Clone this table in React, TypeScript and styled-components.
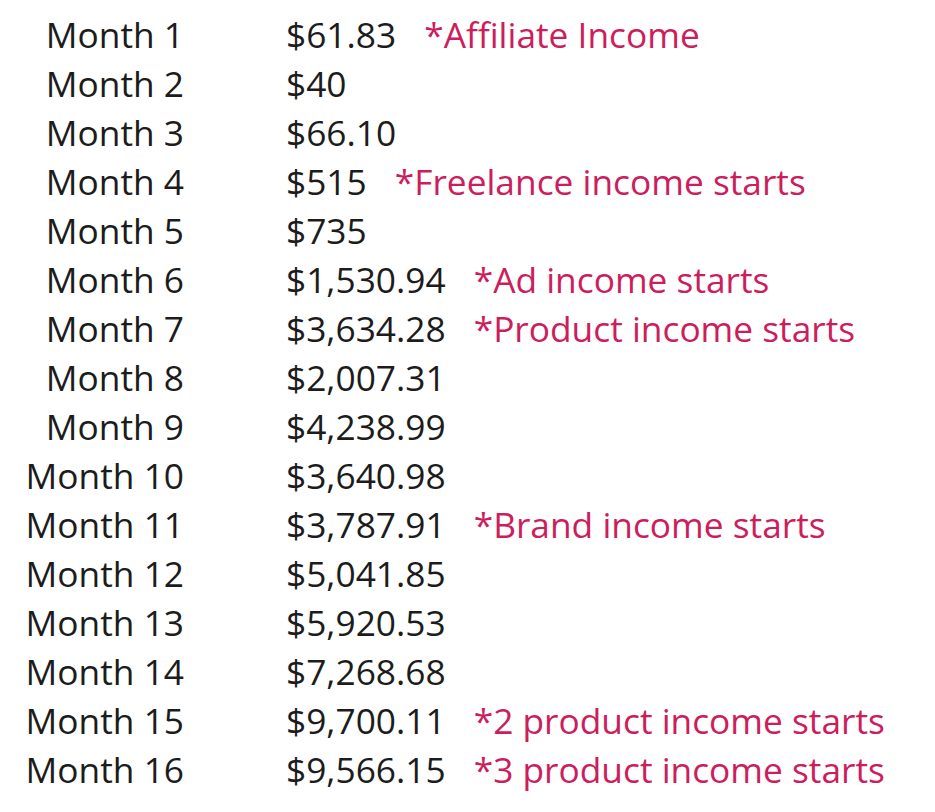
import React from "react";
import styled, { createGlobalStyle } from "styled-components";

const GlobalStyle = createGlobalStyle`
  html, body {
    margin: 0;
    padding: 0;
    background: #ffffff;
  }
  body {
    font-family: "Open Sans", "Noto Sans", sans-serif;
  }
`;

const Table = styled.div`
  display: flex;
  flex-direction: column;
  padding: 10px 0 0 0;
  font-family: "Open Sans", "Noto Sans", sans-serif;
  font-size: 35.3px;
  line-height: 49px;
  color: #1c1c1c;
`;

const Row = styled.div`
  display: flex;
  align-items: baseline;
  white-space: nowrap;
`;

const MonthCell = styled.span`
  width: 184px;
  text-align: right;
  flex: none;
`;

const AmountCell = styled.span`
  margin-left: 102px;
`;

const Note = styled.span`
  margin-left: 28px;
  color: #cc1d5d;
`;

const rows: { month: string; amount: string; note?: string }[] = [
  { month: "Month 1", amount: "$61.83", note: "*Affiliate Income" },
  { month: "Month 2", amount: "$40" },
  { month: "Month 3", amount: "$66.10" },
  { month: "Month 4", amount: "$515", note: "*Freelance income starts" },
  { month: "Month 5", amount: "$735" },
  { month: "Month 6", amount: "$1,530.94", note: "*Ad income starts" },
  { month: "Month 7", amount: "$3,634.28", note: "*Product income starts" },
  { month: "Month 8", amount: "$2,007.31" },
  { month: "Month 9", amount: "$4,238.99" },
  { month: "Month 10", amount: "$3,640.98" },
  { month: "Month 11", amount: "$3,787.91", note: "*Brand income starts" },
  { month: "Month 12", amount: "$5,041.85" },
  { month: "Month 13", amount: "$5,920.53" },
  { month: "Month 14", amount: "$7,268.68" },
  { month: "Month 15", amount: "$9,700.11", note: "*2 product income starts" },
  { month: "Month 16", amount: "$9,566.15", note: "*3 product income starts" },
];

export default function App() {
  return (
    <>
      <GlobalStyle />
      <Table>
        {rows.map((r) => (
          <Row key={r.month}>
            <MonthCell>{r.month}</MonthCell>
            <AmountCell>{r.amount}</AmountCell>
            {r.note && <Note>{r.note}</Note>}
          </Row>
        ))}
      </Table>
    </>
  );
}
